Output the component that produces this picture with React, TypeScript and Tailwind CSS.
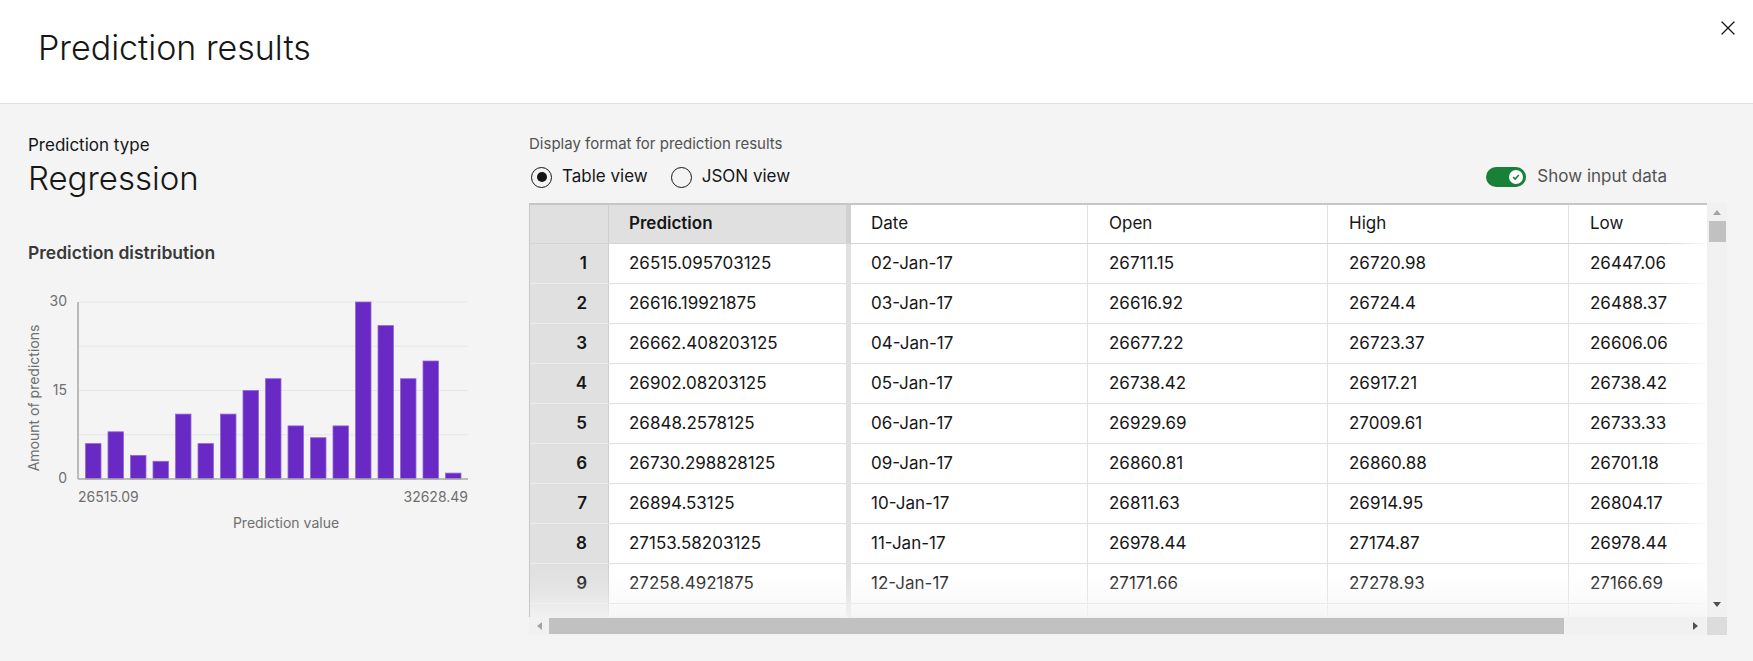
import { X } from 'lucide-react';

const bars = [6, 8, 4, 3, 11, 6, 11, 15, 17, 9, 7, 9, 30, 26, 17, 20, 1];

const rows = [
  ['26515.095703125', '02-Jan-17', '26711.15', '26720.98', '26447.06'],
  ['26616.19921875', '03-Jan-17', '26616.92', '26724.4', '26488.37'],
  ['26662.408203125', '04-Jan-17', '26677.22', '26723.37', '26606.06'],
  ['26902.08203125', '05-Jan-17', '26738.42', '26917.21', '26738.42'],
  ['26848.2578125', '06-Jan-17', '26929.69', '27009.61', '26733.33'],
  ['26730.298828125', '09-Jan-17', '26860.81', '26860.88', '26701.18'],
  ['26894.53125', '10-Jan-17', '26811.63', '26914.95', '26804.17'],
  ['27153.58203125', '11-Jan-17', '26978.44', '27174.87', '26978.44'],
  ['27258.4921875', '12-Jan-17', '27171.66', '27278.93', '27166.69'],
  ['', '', '', '', ''],
];

function Chart() {
  const x0 = 78;
  const y0 = 479;
  const top = 302;
  const right = 468;
  const unit = (y0 - top) / 30;
  return (
    <svg width="460" height="255" viewBox="18 285 460 255" className="mt-[20px] ml-[-10px] block">
      {[302, 346.25, 390.5, 434.75].map((y) => (
        <line key={y} x1={x0} x2={right} y1={y} y2={y} stroke="#e6e6e6" strokeWidth="1" />
      ))}
      {bars.map((v, i) => (
        <rect
          key={i}
          x={85.5 + i * 22.5}
          y={y0 - v * unit}
          width={15.5}
          height={v * unit}
          fill="#6929c4"
          stroke="#9466d9"
          strokeWidth="0.8"
        />
      ))}
      <line x1={x0} x2={x0} y1={top} y2={y0} stroke="#a8a8a8" strokeWidth="1.5" />
      <line x1={x0} x2={right} y1={y0} y2={y0} stroke="#a8a8a8" strokeWidth="1.5" />
      <g fill="#6f6f6f" fontSize="14" fontFamily="Inter, sans-serif">
        <text x="67" y="302" textAnchor="end" dominantBaseline="middle">30</text>
        <text x="67" y="391" textAnchor="end" dominantBaseline="middle">15</text>
        <text x="67" y="479" textAnchor="end" dominantBaseline="middle">0</text>
        <text x="78" y="498" dominantBaseline="middle">26515.09</text>
        <text x="468" y="498" textAnchor="end" dominantBaseline="middle">32628.49</text>
        <text x="286" y="524" textAnchor="middle" dominantBaseline="middle">Prediction value</text>
        <text
          x="35"
          y="398"
          textAnchor="middle"
          dominantBaseline="middle"
          transform="rotate(-90 35 398)"
        >
          Amount of predictions
        </text>
      </g>
    </svg>
  );
}

function Radio({ label, checked }: { label: string; checked?: boolean }) {
  return (
    <label className="flex items-center gap-[10px]">
      <span className="flex h-[21px] w-[21px] items-center justify-center rounded-full border border-[#161616]">
        {checked && <span className="h-[10px] w-[10px] rounded-full bg-[#161616]" />}
      </span>
      <span className="text-[17px] text-[#161616]">{label}</span>
    </label>
  );
}

function Arrow({ dir, color }: { dir: 'up' | 'down' | 'left' | 'right'; color: string }) {
  const pts = {
    up: '0,5 4,0 8,5',
    down: '0,0 8,0 4,5',
    left: '5,0 5,8 0,4',
    right: '0,0 0,8 5,4',
  }[dir];
  const vertical = dir === 'up' || dir === 'down';
  return (
    <svg width={vertical ? 8 : 5} height={vertical ? 5 : 8} className="block">
      <polygon points={pts} fill={color} />
    </svg>
  );
}

function DataTable() {
  return (
    <div className="mt-[14px] flex w-[1198px] flex-col">
      <div className="flex h-[414px]">
        <div className="relative w-[1178px] overflow-hidden border-t-2 border-l border-[#c6c6c6] bg-white">
          <div className="flex h-[39px] border-b border-[#d4d4d4] text-[17px] text-[#161616]">
            <div className="w-[79px] flex-none border-r border-[#cfcfcf] bg-[#e0e0e0]" />
            <div className="flex w-[242px] flex-none items-center border-r-[5px] border-[#d1d1d1] bg-[#e0e0e0] pl-[20px] font-semibold">
              Prediction
            </div>
            <div className="flex w-[237px] flex-none items-center border-r border-[#e0e0e0] pl-[20px]">Date</div>
            <div className="flex w-[240px] flex-none items-center border-r border-[#e0e0e0] pl-[21px]">Open</div>
            <div className="flex w-[241px] flex-none items-center border-r border-[#e0e0e0] pl-[21px]">High</div>
            <div className="flex w-[240px] flex-none items-center pl-[21px]">Low</div>
          </div>
          {rows.map((r, i) => (
            <div key={i} className="flex h-[40px] text-[17px] text-[#161616]">
              <div className="flex w-[79px] flex-none items-center justify-end border-r border-b border-r-[#cfcfcf] border-b-[#ececec] bg-[#e0e0e0] pr-[21px] font-semibold">
                {r[0] ? i + 1 : ''}
              </div>
              <div className="flex w-[242px] flex-none items-center border-r-[5px] border-b border-r-[#e0e0e0] border-b-[#e0e0e0] pl-[20px]">
                {r[0]}
              </div>
              <div className="flex w-[237px] flex-none items-center border-r border-b border-[#e0e0e0] pl-[20px]">{r[1]}</div>
              <div className="flex w-[240px] flex-none items-center border-r border-b border-[#e0e0e0] pl-[21px]">{r[2]}</div>
              <div className="flex w-[241px] flex-none items-center border-r border-b border-[#e0e0e0] pl-[21px]">{r[3]}</div>
              <div className="flex w-[240px] flex-none items-center border-b border-[#e0e0e0] pl-[21px]">{r[4]}</div>
            </div>
          ))}
          <div className="pointer-events-none absolute top-0 right-0 bottom-0 w-[42px] bg-gradient-to-r from-white/0 to-white/90" />
          <div className="pointer-events-none absolute right-0 bottom-0 left-0 h-[46px] bg-gradient-to-b from-[#f4f4f4]/0 via-[#f4f4f4]/30 to-[#f4f4f4]/85" />
        </div>
        <div className="flex w-[20px] flex-col items-center bg-[#f1f1f1]">
          <div className="flex h-[18px] items-center justify-center">
            <Arrow dir="up" color="#a3a3a3" />
          </div>
          <div className="h-[21px] w-[17px] bg-[#c1c1c1]" />
          <div className="flex-1" />
          <div className="flex h-[26px] items-center justify-center">
            <Arrow dir="down" color="#505050" />
          </div>
        </div>
      </div>
      <div className="flex h-[18px]">
        <div className="flex w-[1178px] items-center bg-[#f1f1f1]">
          <div className="flex w-[20px] items-center justify-center">
            <Arrow dir="left" color="#a3a3a3" />
          </div>
          <div className="h-[16px] w-[1015px] bg-[#c1c1c1]" />
          <div className="flex-1" />
          <div className="flex w-[24px] items-center justify-center">
            <Arrow dir="right" color="#505050" />
          </div>
        </div>
        <div className="w-[20px] bg-[#dcdcdc]" />
      </div>
    </div>
  );
}

export default function App() {
  return (
    <div className="flex h-[661px] w-[1753px] flex-col bg-[#f4f4f4] font-[Inter,sans-serif] text-[#161616]">
      <header className="flex h-[104px] flex-none justify-between border-b border-[#e0e0e0] bg-white">
        <h1 className="pt-[28px] pl-[38px] text-[34px] leading-[40px] font-light">Prediction results</h1>
        <button className="mt-[16px] mr-[13px] flex h-[24px] w-[24px] items-center justify-center text-[#161616]">
          <X size={24} strokeWidth={1.3} />
        </button>
      </header>
      <div className="flex flex-1">
        <section className="w-[529px] flex-none pt-[29px] pl-[28px]">
          <p className="text-[17px] leading-[24px]">Prediction type</p>
          <p className="mt-[1px] text-[33px] leading-[40px] font-light">Regression</p>
          <h2 className="mt-[43px] text-[17.5px] leading-[24px] font-semibold text-[#393939]">Prediction distribution</h2>
          <Chart />
        </section>
        <section className="w-[1199px] flex-none pt-[30px]">
          <p className="text-[15px] leading-[20px] text-[#525252]">Display format for prediction results</p>
          <div className="mt-[11px] flex h-[24px] items-center justify-between pr-[61px]">
            <div className="flex items-center gap-[23px] pl-[2px]">
              <Radio label="Table view" checked />
              <Radio label="JSON view" />
            </div>
            <div className="flex items-center gap-[11px]">
              <span className="flex h-[20px] w-[40px] items-center justify-end rounded-full bg-[#198038] pr-[3px]">
                <span className="flex h-[14px] w-[14px] items-center justify-center rounded-full bg-white">
                  <svg width="8" height="8" viewBox="0 0 8 8">
                    <path d="M1.2 4.2 L3.2 6 L6.8 2" fill="none" stroke="#198038" strokeWidth="1.6" />
                  </svg>
                </span>
              </span>
              <span className="text-[17px] text-[#525252]">Show input data</span>
            </div>
          </div>
          <DataTable />
        </section>
      </div>
    </div>
  );
}
